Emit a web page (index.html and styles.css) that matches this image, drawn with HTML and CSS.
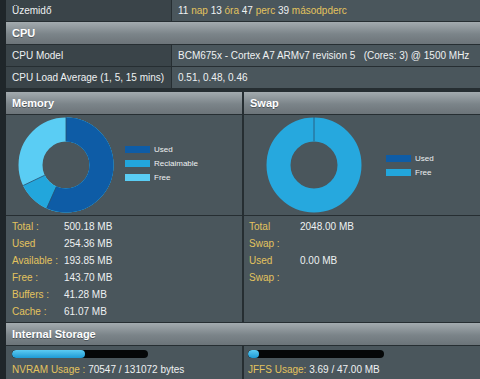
FILE: index.html
```html
<!DOCTYPE html>
<html lang="hu">
<head>
  <meta charset="UTF-8">
  <title>Rendszerállapot</title>
  <link rel="stylesheet" href="styles.css">
</head>
<body>
  <div class="panel">

    <div class="row">
      <div class="cell-label">Üzemidő</div>
      <div class="cell-value">11 <span class="unit">nap</span> 13 <span class="unit">óra</span> 47 <span class="unit">perc</span> 39 <span class="unit">másodpderc</span></div>
    </div>

    <div class="head">CPU</div>

    <div class="row">
      <div class="cell-label">CPU Model</div>
      <div class="cell-value">BCM675x - Cortex A7 ARMv7 revision 5 &nbsp; (Cores: 3) @ 1500 MHz</div>
    </div>
    <div class="row">
      <div class="cell-label">CPU Load Average (1, 5, 15 mins)</div>
      <div class="cell-value">0.51, 0.48, 0.46</div>
    </div>

    <div class="split gap-top">
      <div class="col col-mem">
        <div class="head">Memory</div>
        <div class="chart">
          <svg class="donut donut-mem" width="96" height="96" viewBox="0 0 96 96">
            <g transform="rotate(-90 48 48)">
              <!-- used 56.7%, reclaimable 11.2%, free 32.1% -->
              <circle cx="48" cy="48" r="35.5" fill="none" stroke="#5acdf4" stroke-width="24"/>
              <circle cx="48" cy="48" r="35.5" fill="none" stroke="#22a6dc" stroke-width="24" stroke-dasharray="151.2 223"/>
              <circle cx="48" cy="48" r="35.5" fill="none" stroke="#0e5ca6" stroke-width="24" stroke-dasharray="126.3 223"/>
            </g>
            <line x1="48" y1="0" x2="48" y2="24" stroke="#2a4f6e" stroke-width="0.8"/>
            <line x1="38.4" y1="69.5" x2="28.7" y2="91.4" stroke="#2a4f6e" stroke-width="0.8"/>
            <line x1="26.8" y1="58.2" x2="5.2" y2="68.5" stroke="#2a4f6e" stroke-width="0.8"/>
          </svg>
          <ul class="legend legend-mem">
            <li><span class="sw sw-used"></span>Used</li>
            <li><span class="sw sw-recl"></span>Reclaimable</li>
            <li><span class="sw sw-free"></span>Free</li>
          </ul>
        </div>
        <dl class="stats stats-mem">
          <dt>Total :</dt><dd>500.18 MB</dd>
          <dt>Used</dt><dd>254.36 MB</dd>
          <dt>Available :</dt><dd>193.85 MB</dd>
          <dt>Free :</dt><dd>143.70 MB</dd>
          <dt>Buffers :</dt><dd>41.28 MB</dd>
          <dt>Cache :</dt><dd>61.07 MB</dd>
        </dl>
      </div>

      <div class="col col-swap">
        <div class="head">Swap</div>
        <div class="chart">
          <svg class="donut donut-swap" width="96" height="96" viewBox="0 0 96 96">
            <circle cx="48" cy="48" r="35.5" fill="none" stroke="#26a8de" stroke-width="24"/>
            <line x1="48" y1="0" x2="48" y2="24" stroke="#2a4f6e" stroke-width="0.8"/>
          </svg>
          <ul class="legend legend-swap">
            <li><span class="sw sw-used"></span>Used</li>
            <li><span class="sw sw-recl"></span>Free</li>
          </ul>
        </div>
        <dl class="stats stats-swap">
          <dt>Total</dt><dd>2048.00 MB</dd>
          <dt>Swap :</dt><dd></dd>
          <dt>Used</dt><dd>0.00 MB</dd>
          <dt>Swap :</dt><dd></dd>
        </dl>
      </div>
    </div>

    <div class="head">Internal Storage</div>
    <div class="split">
      <div class="col col-mem storage">
        <div class="bar"><div class="bar-fill" style="width: 53.8%"></div></div>
        <p class="usage"><span class="unit">NVRAM Usage :</span> 70547 / 131072 bytes</p>
      </div>
      <div class="col col-swap storage">
        <div class="bar"><div class="bar-fill" style="width: 7.9%"></div></div>
        <p class="usage"><span class="unit">JFFS Usage:</span> 3.69 / 47.00 MB</p>
      </div>
    </div>

  </div>
</body>
</html>
```

FILE: styles.css
```css
/* alap */
* {
  box-sizing: border-box;
}

body {
  margin: 0;
  background-color: #1f262a;
  font-family: "Liberation Sans", Arial, sans-serif;
  font-size: 10px;
  color: #eef1f2;
  overflow: hidden;
}

.panel {
  margin-left: 6px;
  background-color: #262e32;
}

/* táblázat sorok */
.row {
  display: flex;
  height: 22px;
  border-bottom: 1px solid #262e32;
}

.cell-label {
  width: 166px;
  padding-left: 6px;
  background-color: #3a4449;
  line-height: 21px;
  border-right: 1px solid #262e32;
}

.cell-value {
  flex: 1;
  padding-left: 6px;
  background-color: #4a565c;
  line-height: 21px;
  white-space: nowrap;
}

.unit {
  color: #e3c35e;
}

/* fejléc sáv */
.head {
  height: 23px;
  line-height: 22px;
  padding-left: 6px;
  font-weight: bold;
  font-size: 11px;
  color: #fff;
  background: linear-gradient(#a3abaf, #7b8489 55%, #6c7479);
  border-bottom: 1px solid #262e32;
  text-shadow: 0 1px 0 #4d555a;
}

.gap-top {
  margin-top: 3px;
}

/* memória / swap oszlopok */
.split {
  display: flex;
  gap: 2px;
}

.col {
  background-color: #4a565c;
}

.col-mem {
  width: 236px;
}

.col-swap {
  flex: 1;
}

.chart {
  display: flex;
  align-items: center;
  height: 101px;
  border-bottom: 1px solid #262e32;
}

.donut-mem {
  margin-left: 12px;
}

.donut-swap {
  margin-left: 22px;
}

.legend {
  list-style: none;
  margin: 0;
  padding: 0;
  font-size: 8px;
}

.legend li {
  display: flex;
  align-items: center;
  height: 14px;
}

.legend-mem {
  margin-left: 11px;
  margin-top: -3px;
}

.legend-swap {
  margin-left: 24px;
  margin-top: 0;
}

.sw {
  display: inline-block;
  width: 25px;
  height: 7px;
  margin-right: 4px;
}

.sw-used { background-color: #0e5ca6; }
.sw-recl { background-color: #22a6dc; }
.sw-free { background-color: #5acdf4; }

/* statisztika */
.stats {
  display: grid;
  grid-template-columns: 52px 1fr;
  grid-auto-rows: 17px;
  align-items: center;
  align-content: start;
  margin: 0;
  padding: 2px 6px 3px;
  height: 107px;
  border-bottom: 1px solid #262e32;
}

.stats-swap {
  grid-template-columns: 51px 1fr;
  padding-left: 5px;
}

.stats dt {
  color: #e3c35e;
}

.stats dd {
  margin: 0;
}

/* tárhely */
.storage {
  height: 40px;
  padding: 4px 6px 0;
}

.col-swap.storage {
  padding-left: 4px;
}

.bar {
  width: 136px;
  height: 8px;
  border-radius: 4px;
  background-color: #050708;
  overflow: hidden;
}

.bar-fill {
  height: 100%;
  border-radius: 4px;
  background: linear-gradient(#5ccbf3, #1e9ad4);
}

.usage {
  margin: 6px 0 0;
  font-size: 10px;
}
```
